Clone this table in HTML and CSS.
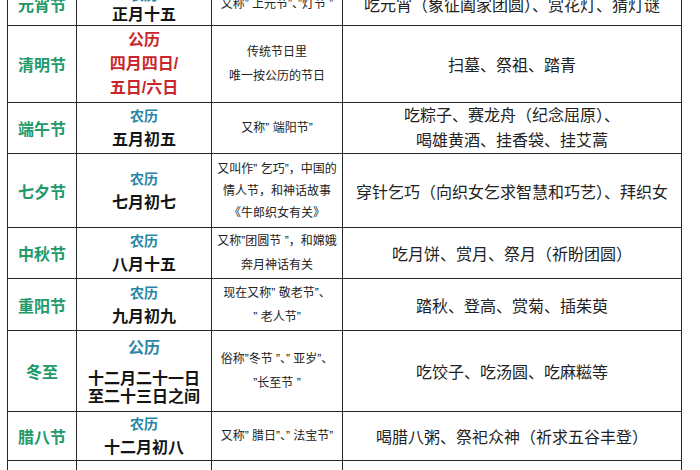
FILE: index.html
```html
<!DOCTYPE html>
<html lang="zh-CN">
<head>
<meta charset="utf-8">
<title>中国传统节日</title>
<link rel="stylesheet" href="styles.css">
</head>
<body>
<div class="sheet">
<table class="fest">
  <colgroup>
    <col class="c-name">
    <col class="c-date">
    <col class="c-note">
    <col class="c-custom">
  </colgroup>
  <tbody>
    <tr class="r-yx">
      <td class="name">元宵节</td>
      <td class="date"><span class="cal blue">农历</span><span class="day">正月十五</span></td>
      <td class="note"><span class="line">又称” 上元节”、”灯节 ”</span></td>
      <td class="custom">吃元宵（象征阖家团圆）、赏花灯、猜灯谜</td>
    </tr>
    <tr class="r-qm">
      <td class="name">清明节</td>
      <td class="date red"><span class="cal">公历</span><span class="day">四月四日/</span><span class="day">五日/六日</span></td>
      <td class="note"><span class="line">传统节日里</span><span class="line">唯一按公历的节日</span></td>
      <td class="custom">扫墓、祭祖、踏青</td>
    </tr>
    <tr class="r-dw">
      <td class="name">端午节</td>
      <td class="date"><span class="cal blue">农历</span><span class="day">五月初五</span></td>
      <td class="note"><span class="line">又称” 端阳节”</span></td>
      <td class="custom"><span class="cline">吃粽子、赛龙舟（纪念屈原）、</span><span class="cline">喝雄黄酒、挂香袋、挂艾蒿</span></td>
    </tr>
    <tr class="r-qx">
      <td class="name">七夕节</td>
      <td class="date"><span class="cal blue">农历</span><span class="day">七月初七</span></td>
      <td class="note tight"><span class="line">又叫作” 乞巧”，中国的</span><span class="line">情人节，和神话故事</span><span class="line">《牛郎织女有关》</span></td>
      <td class="custom">穿针乞巧（向织女乞求智慧和巧艺）、拜织女</td>
    </tr>
    <tr class="r-zq">
      <td class="name">中秋节</td>
      <td class="date"><span class="cal blue">农历</span><span class="day">八月十五</span></td>
      <td class="note"><span class="line">又称”团圆节 ”，和嫦娥</span><span class="line">奔月神话有关</span></td>
      <td class="custom">吃月饼、赏月、祭月（祈盼团圆）</td>
    </tr>
    <tr class="r-cy">
      <td class="name">重阳节</td>
      <td class="date"><span class="cal blue">农历</span><span class="day">九月初九</span></td>
      <td class="note"><span class="line">现在又称” 敬老节”、</span><span class="line">” 老人节”</span></td>
      <td class="custom">踏秋、登高、赏菊、插茱萸</td>
    </tr>
    <tr class="r-dz">
      <td class="name">冬至</td>
      <td class="date"><span class="cal blue gap">公历</span><span class="day small">十二月二十一日</span><span class="day small">至二十三日之间</span></td>
      <td class="note"><span class="line">俗称”冬节 ”、” 亚岁”、</span><span class="line">”长至节 ”</span></td>
      <td class="custom">吃饺子、吃汤圆、吃麻糍等</td>
    </tr>
    <tr class="r-lb">
      <td class="name">腊八节</td>
      <td class="date"><span class="cal blue">农历</span><span class="day">十二月初八</span></td>
      <td class="note"><span class="line">又称” 腊日”、” 法宝节”</span></td>
      <td class="custom">喝腊八粥、祭祀众神（祈求五谷丰登）</td>
    </tr>
    <tr class="r-end">
      <td></td><td></td><td></td><td></td>
    </tr>
  </tbody>
</table>
</div>
</body>
</html>
```

FILE: styles.css
```css
html, body {
  margin: 0;
  padding: 0;
  background: #ffffff;
}

body {
  font-family: "Liberation Sans", "Noto Sans CJK SC", sans-serif;
  color: #1a1a1a;
  overflow: hidden;
  height: 470px;
}

.sheet {
  padding-left: 7px;
}

.fest {
  margin-top: -25px;
  border-collapse: collapse;
  table-layout: fixed;
  width: 674px;
}

.c-name { width: 69px; }
.c-date { width: 135px; }
.c-note { width: 131px; }
.c-custom { width: 339px; }

.fest td {
  border: 1px solid #262626;
  padding: 0;
  text-align: center;
  vertical-align: middle;
}

.r-yx { height: 50px; }
.r-qm { height: 77px; }
.r-dw { height: 51px; }
.r-qx { height: 74px; }
.r-zq { height: 51px; }
.r-cy { height: 52px; }
.r-dz { height: 81px; }
.r-lb { height: 49px; }
.r-end { height: 60px; }

.r-yx td {
  padding-top: 6px;
}

.r-yx td.date {
  padding-top: 0;
  vertical-align: bottom;
}

.r-yx .date span {
  line-height: 20px;
}

.name {
  font-size: 16px;
  font-weight: bold;
  color: #22996b;
}

.date span {
  display: block;
  line-height: 24px;
}

.date .cal {
  font-size: 14px;
  font-weight: bold;
}

.date .day {
  font-size: 16px;
  font-weight: bold;
  color: #141414;
}

.date.red .cal,
.date.red .day {
  color: #c8262c;
  font-size: 16px;
}

.date .blue {
  color: #2b86a6;
}

.date .gap {
  font-size: 16px;
  margin-bottom: 10px;
}

.date .small {
  line-height: 18px;
}

.note {
  font-size: 12px;
  color: #222222;
  white-space: nowrap;
}

.note .line {
  display: block;
  line-height: 24px;
}

.note.tight .line {
  line-height: 22px;
}

.custom {
  font-size: 16px;
  color: #222222;
  white-space: nowrap;
}

.custom .cline {
  display: block;
  line-height: 25px;
}
```
